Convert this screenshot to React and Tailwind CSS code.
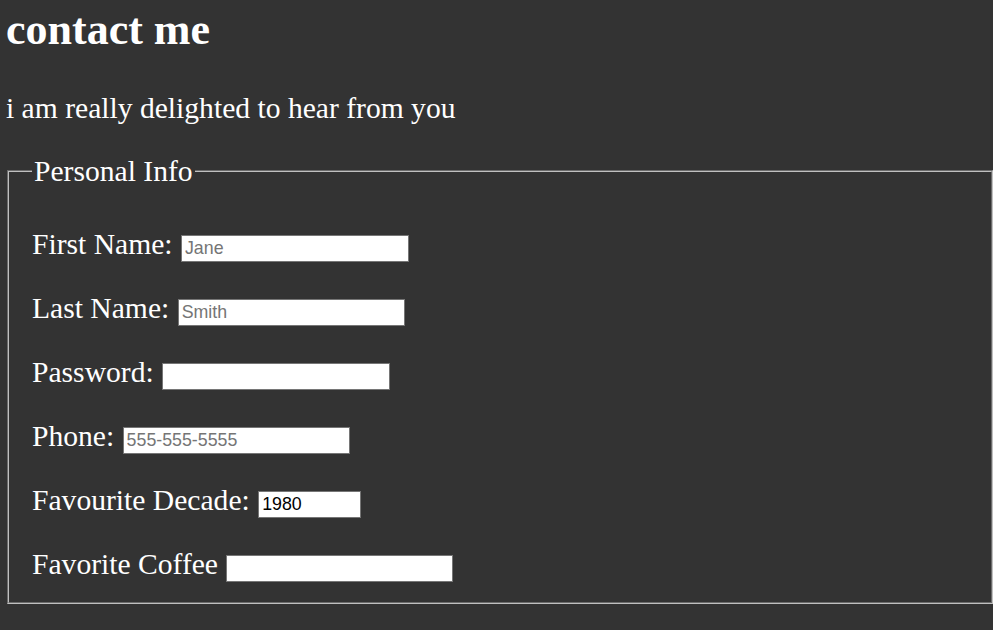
import React from 'react';

const fields = [
  { label: 'First Name: ', placeholder: 'Jane', width: 'w-[228px]' },
  { label: 'Last Name: ', placeholder: 'Smith', width: 'w-[227px]' },
  { label: 'Password: ', placeholder: '', width: 'w-[228px]', type: 'password' },
  { label: 'Phone: ', placeholder: '555-555-5555', width: 'w-[227px]' },
  { label: 'Favourite Decade: ', value: '1980', width: 'w-[103px]' },
  { label: 'Favorite Coffee ', placeholder: '', width: 'w-[227px]' },
];

const App = () => {
  return (
    <div className="min-h-[630px] bg-[#333333] pl-[6px] text-white font-['Liberation_Serif','Times_New_Roman',serif]">
      <h1 className="pt-[5px] text-[44px] font-bold leading-[50px]">contact me</h1>
      <p className="mt-[36px] text-[29.6px] leading-[34px]">i am really delighted to hear from you</p>

      <fieldset className="mt-[30px] ml-[1px] border-2 border-[#c0c0c0] [border-style:groove] pl-[23px] pt-[40px] pb-[21px]">
        <legend className="px-[2px] text-[29.6px] leading-[32px]">Personal Info</legend>
        <div className="flex flex-col gap-[30px]">
          {fields.map((f) => (
            <div key={f.label} className="h-[34px] text-[29.6px] leading-[34px] whitespace-nowrap">
              <label>{f.label}</label>
              <input
                type={f.type || 'text'}
                placeholder={f.placeholder}
                defaultValue={f.value}
                className={`${f.width} ml-[1px] h-[27px] inline-block align-baseline border border-[#767676] bg-white px-[3px] py-[1px] text-[17.8px] leading-normal text-black placeholder:text-[#757575] font-['Liberation_Sans',Arial,sans-serif]`}
              />
            </div>
          ))}
        </div>
      </fieldset>
    </div>
  );
};

export default App;
